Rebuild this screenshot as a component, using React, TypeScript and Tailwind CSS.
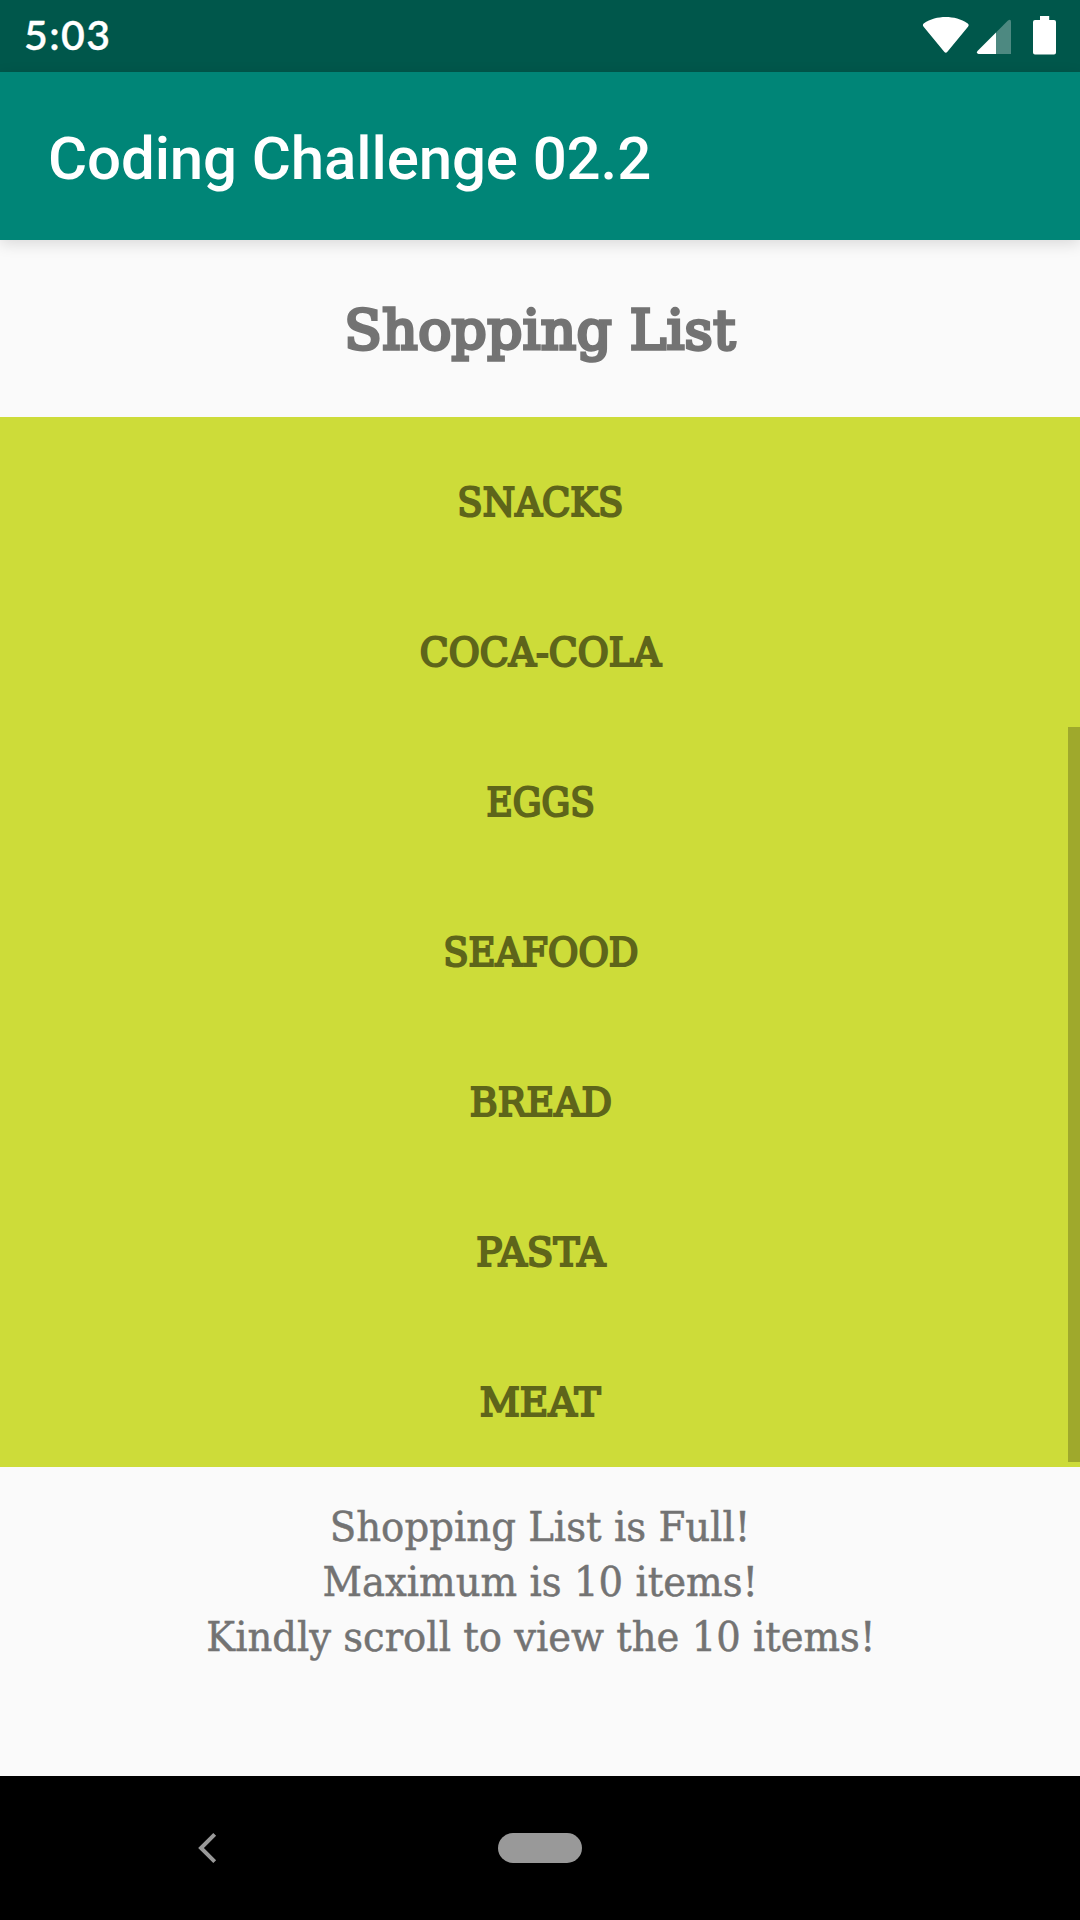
const items = [
  { name: 'SNACKS', fit: 'scale-x-[0.95]' },
  { name: 'COCA-COLA', fit: 'scale-x-[0.97]' },
  { name: 'EGGS', fit: 'scale-x-[0.923]' },
  { name: 'SEAFOOD', fit: 'scale-x-[0.95]' },
  { name: 'BREAD', fit: 'scale-x-[0.975]' },
  { name: 'PASTA', fit: 'scale-x-[0.997]' },
  { name: 'MEAT', fit: 'scale-x-[1.003]' },
];

const notes = [
  { text: 'Shopping List is Full!', fit: 'scale-x-[0.943]' },
  { text: 'Maximum is 10 items!', fit: 'scale-x-[0.942]' },
  { text: 'Kindly scroll to view the 10 items!', fit: 'scale-x-[0.94]' },
];

function StatusBar() {
  return (
    <div className="flex h-[72px] shrink-0 items-start justify-between bg-[#00574b] pr-6 pl-6 text-white">
      <span className="mt-[-1px] font-['Lato',sans-serif] text-[41px] leading-[72px] font-semibold tracking-[1.4px] [-webkit-text-stroke:0.3px_white]">
        5:03
      </span>
      <div className="flex">
        <svg className="h-[72px] w-[48px]" viewBox="922 0 48 72" fill="currentColor">
          <path d="M923.6 26.8Q922 24.800 924 23.200C930 19 938 17 945.700 17S961.400 19 967.400 23.200Q969.600 24.800 968 26.800L947.400 51.800Q945.800 53.800 944.200 51.800Z" />
        </svg>
        <svg className="ml-1.5 h-[72px] w-9" viewBox="976 0 36 72" fill="currentColor">
          <path opacity="0.3" d="M996 32.500L1007.700 20.700Q1011 18.400 1011 22V54H996Z" />
          <path d="M996 32.500V54H978.500Q975.600 53.400 977.500 51Z" />
        </svg>
        <svg className="ml-[21px] h-[72px] w-[23px]" viewBox="1033 0 23 72" fill="currentColor">
          <path d="M1040 16H1049.200V20H1054Q1056 20 1056 22V52.500Q1056 54.600 1054 54.600H1035Q1033 54.600 1033 52.500V22Q1033 20 1035 20H1040Z" />
        </svg>
      </div>
    </div>
  );
}

function NavigationBar() {
  return (
    <nav className="grid h-36 shrink-0 grid-cols-[498px_84px_498px] items-center bg-black text-[#999999]">
      <svg className="ml-[196px] h-8 w-[22px]" viewBox="0 0 22 32" fill="none" stroke="currentColor" strokeWidth="4">
        <path d="M18.700 2.300L5 16L18.700 29.700" />
      </svg>
      <div className="h-[30px] rounded-full bg-[#999999]" />
    </nav>
  );
}

export default function App() {
  return (
    <div className="flex h-[1920px] w-[1080px] flex-col overflow-hidden bg-[#fafafa] font-['DejaVu_Serif',serif]">
      <StatusBar />
      <header className="z-10 flex h-[168px] shrink-0 items-center bg-[#008577] px-12 pt-[5px] shadow-[0_4px_14px_rgba(0,0,0,0.13)]">
        <h1 className="font-['Roboto',sans-serif] text-[60px] font-medium tracking-[-0.12px] whitespace-nowrap text-white">
          Coding Challenge 02.2
        </h1>
      </header>
      <div className="flex h-[177px] shrink-0 items-center justify-center pt-1">
        <h2 className="text-[55px] leading-none tracking-[0.35px] whitespace-nowrap text-[#737373] [-webkit-text-stroke:3.4px_#737373]">
          Shopping List
        </h2>
      </div>
      <main className="relative h-[1050px] shrink-0 overflow-hidden bg-[#cddc39] pt-2.5">
        <ul>
          {items.map(({ name, fit }) => (
            <li key={name} className="flex h-[150px] items-center justify-center pl-px">
              <span className={`${fit} text-[39px] leading-none text-[#5e651a] [-webkit-text-stroke:2.2px_#5e651a]`}>
                {name}
              </span>
            </li>
          ))}
        </ul>
        <div className="absolute right-0 bottom-[5px] h-[735px] w-3 bg-[#9fa92c]" />
      </main>
      <div className="flex grow flex-col items-center pt-[33px] pl-px">
        {notes.map(({ text, fit }) => (
          <p
            key={text}
            className={`${fit} text-[41px] leading-[55px] whitespace-nowrap text-[#737373] [-webkit-text-stroke:0.5px_#737373]`}
          >
            {text}
          </p>
        ))}
      </div>
      <NavigationBar />
    </div>
  );
}
